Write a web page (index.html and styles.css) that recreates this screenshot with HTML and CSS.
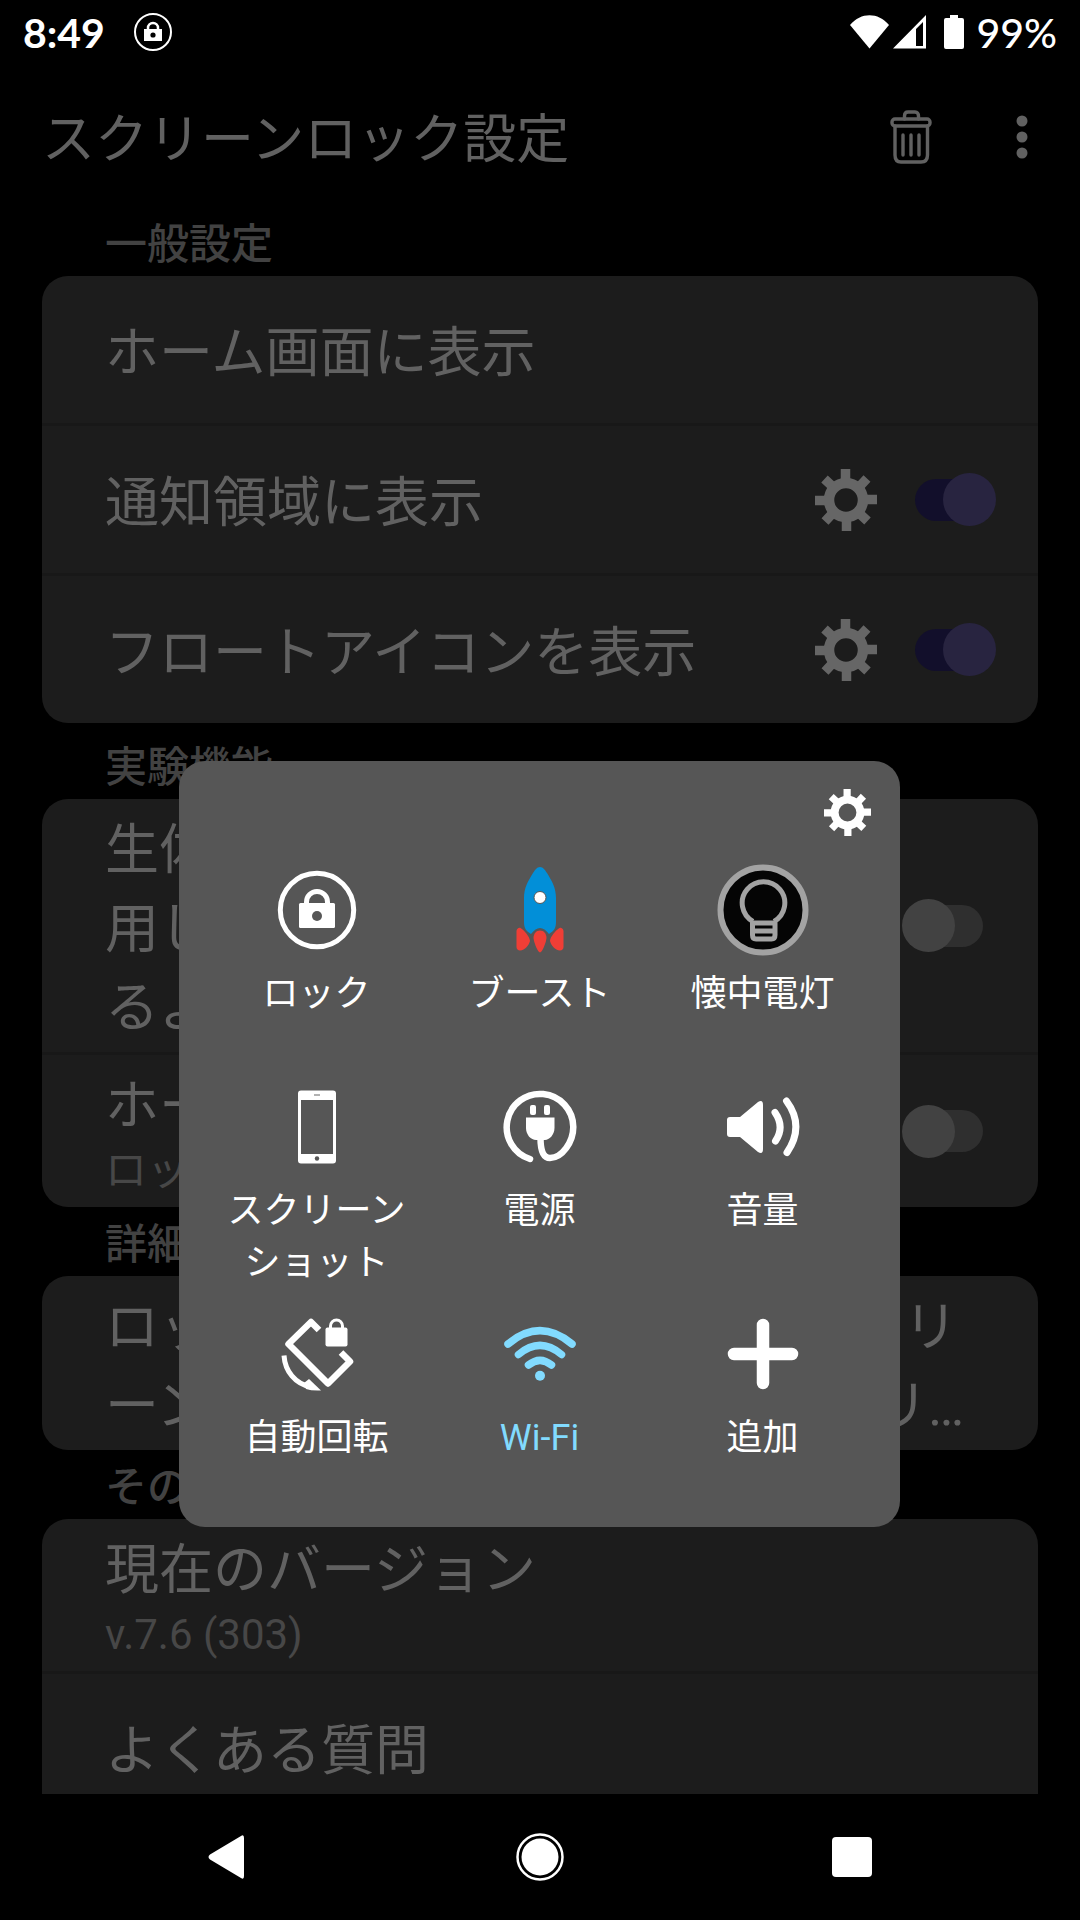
FILE: index.html
```html
<!DOCTYPE html>
<html lang="ja">
<head>
<meta charset="utf-8">
<meta name="viewport" content="width=device-width, initial-scale=1">
<title>スクリーンロック設定</title>
<link rel="stylesheet" href="styles.css">
</head>
<body>
<svg class="defs" aria-hidden="true">
  <symbol id="gear" viewBox="-31 -31 62 62">
    <circle r="17" fill="none" stroke="currentColor" stroke-width="10.500"/>
    <path d="M-0.500-31V-19M0.500 31V19M-31 0.500H-19M31-0.500H19M-21.500-21L-14-14M21-21.500L14-14M-21 21.500L-14 14M21.500 21L14 14" stroke="currentColor" stroke-width="9.500"/>
  </symbol>
</svg>

<div class="screen">
  <header class="status">
    <span class="status-time">8:49</span>
    <svg class="status-lock" viewBox="-20 -20 40 40" width="40" height="40">
      <circle r="18" fill="none" stroke="#fff" stroke-width="2"/>
      <path d="M-9-3H9V9H-9z" fill="#fff"/>
      <path d="M-5-2V-4a5 5 0 0 1 10 0V-2" fill="none" stroke="#fff" stroke-width="2.500"/>
      <circle cy="3" r="2.600" fill="#000"/>
    </svg>
    <div class="status-right">
      <svg viewBox="0 0 39 34" width="39" height="34"><path d="M0 10C11-3 28-3 39 10L19.500 33.500z" fill="#fff"/></svg>
      <svg viewBox="0 0 33 34" width="33" height="34"><path fill-rule="evenodd" d="M0 33.500L33 0V33.500zM23 14V31H30V7z" fill="#fff"/></svg>
      <svg class="battery" viewBox="0 0 20 34" width="20" height="34"><path d="M6 0H14V3H18Q20 3 20 5V32Q20 34 18 34H2Q0 34 0 32V5Q0 3 2 3H6z" fill="#fff"/></svg>
      <span class="status-percent">99%</span>
    </div>
  </header>

  <div class="appbar">
    <h1 class="appbar-title">スクリーンロック設定</h1>
    <button class="icon-button" aria-label="削除">
      <svg viewBox="-21 -27 42 54" width="42" height="54" fill="none" stroke="currentColor" stroke-width="3.400" stroke-linecap="round">
        <rect x="-19" y="-18" width="38" height="7" rx="3"/>
        <path d="M-6.500-18V-21Q-6.500-25-3-25H4Q7.500-25 7.500-21V-18M-16-11V18Q-16 25-10 25H10Q16.500 25 16.500 18V-11M-8-2V18M0-2V18M8-2V18"/>
      </svg>
    </button>
    <button class="icon-button" aria-label="その他のオプション">
      <svg viewBox="-6 -22 12 44" width="12" height="44" fill="currentColor"><circle cy="-16" r="5.500"/><circle r="5.500"/><circle cy="16" r="5.500"/></svg>
    </button>
  </div>

  <main class="settings">
    <h2 class="section-title">一般設定</h2>
    <ul class="card">
      <li class="row"><span class="row-title">ホーム画面に表示</span></li>
      <li class="row">
        <label class="row-title" for="notify">通知領域に表示</label>
        <button class="icon-button" aria-label="通知領域の設定"><svg width="62" height="62"><use href="#gear"/></svg></button>
        <input class="switch" type="checkbox" id="notify" checked>
      </li>
      <li class="row">
        <label class="row-title" for="float">フロートアイコンを表示</label>
        <button class="icon-button" aria-label="フロートアイコンの設定"><svg width="62" height="62"><use href="#gear"/></svg></button>
        <input class="switch" type="checkbox" id="float" checked>
      </li>
    </ul>

    <h2 class="section-title section-title-spaced">実験機能</h2>
    <ul class="card">
      <li class="row row-wide-end">
        <label class="row-title" for="bio">生体認証を使<br>用して解除でき<br>るよう</label>
        <input class="switch" type="checkbox" id="bio">
      </li>
      <li class="row row-wide-end">
        <label class="row-title" for="home">ホームボタン<span class="row-sub">ロックする</span></label>
        <input class="switch" type="checkbox" id="home">
      </li>
    </ul>

    <h2 class="section-title">詳細</h2>
    <ul class="card">
      <li class="row"><span class="row-title">ロック時に画面をOFFしないスクリ<br>ーンを表示 OFF 時のロックアプリ…</span></li>
    </ul>

    <h2 class="section-title">その他</h2>
    <ul class="card">
      <li class="row"><span class="row-title">現在のバージョン<span class="row-sub">v.7.6 (303)</span></span></li>
      <li class="row"><span class="row-title">よくある質問</span></li>
    </ul>
  </main>

  <nav class="navbar">
    <button class="nav-button" aria-label="戻る"><svg viewBox="0 0 40 44" width="40" height="44"><path d="M2 19.500L33 1Q36-1 36 3V41Q36 45 33 43L2 24.500Q-1 22 2 19.500z" fill="#fff"/></svg></button>
    <button class="nav-button" aria-label="ホーム"><svg viewBox="-24 -24 48 48" width="48" height="48"><circle r="22.500" fill="none" stroke="#fff" stroke-width="2.500"/><circle r="18.500" fill="#fff"/></svg></button>
    <button class="nav-button" aria-label="最近"><svg viewBox="0 0 40 40" width="40" height="40"><rect width="40" height="40" rx="4" fill="#fff"/></svg></button>
  </nav>
</div>

<div class="overlay">
  <section class="panel" role="dialog" aria-label="ショートカット">
    <div class="panel-head">
      <button class="panel-gear" aria-label="設定"><svg width="47" height="47"><use href="#gear"/></svg></button>
    </div>
    <div class="panel-grid">
      <button class="tile">
        <svg viewBox="-46 -46 92 92" class="tile-icon">
          <circle r="36.700" fill="none" stroke="#fff" stroke-width="5"/>
          <rect x="-18" y="-7" width="36" height="25" rx="1.500" fill="#fff"/>
          <path d="M-10.500-6V-8a10.500 10.500 0 0 1 21 0V-6" fill="none" stroke="#fff" stroke-width="5"/>
          <circle cy="6" r="5" fill="#565656"/>
        </svg>
        <span>ロック</span>
      </button>
      <button class="tile">
        <svg viewBox="-46 -46 92 92" class="tile-icon">
          <path d="M0-43C3-43 5-40 7-37C12-29 16-22 16-12V12C16 18 14 21 9 24C6 20 3 18 0 18C-3 18-6 20-9 24C-14 21-16 18-16 12V-12C-16-22-12-29-7-37C-5-40-3-43 0-43z" fill="#028fd8"/>
          <circle cy="-12.500" r="6" fill="#fff" stroke="#565656"/>
          <g fill="#ef3e36">
            <path d="M0 20.500C4 20.500 6.500 24 6.500 28C6 33 2 42.500 0 42.500C-2 42.500-6 33-6.500 28C-6.500 24-4 20.500 0 20.500z"/>
            <path d="M-19.500 18C-16 20-10 27-10 31C-11 35-15 40.500-20 40.500C-22 40.500-23.500 39-23.500 37V21C-23.500 19-21 17-19.500 18z"/>
            <path d="M19.500 18C16 20 10 27 10 31C11 35 15 40.500 20 40.500C22 40.500 23.500 39 23.500 37V21C23.500 19 21 17 19.500 18z"/>
          </g>
        </svg>
        <span>ブースト</span>
      </button>
      <button class="tile">
        <svg viewBox="-46 -46 92 92" class="tile-icon" fill="none" stroke="#a3a3a3" stroke-width="5">
          <circle r="42.500" fill="#050505" stroke-width="6"/>
          <path d="M-10 11.500A21.300 21.300 0 1 1 11 11.500"/>
          <path d="M-10.500 13H12V25Q12 29 8.500 29H-7Q-10.500 29-10.500 25zM-10.500 21H12" stroke-linejoin="round"/>
        </svg>
        <span>懐中電灯</span>
      </button>
      <button class="tile">
        <svg viewBox="-46 -46 92 92" class="tile-icon">
          <path fill-rule="evenodd" fill="#fff" d="M-16-36.500H16Q19-36.500 19-33.500V33.500Q19 36.500 16 36.500H-16Q-19 36.500-19 33.500V-33.500Q-19-36.500-16-36.500zM-16-27V27H16V-27z"/>
          <path d="M-3-32H3" stroke="#999" stroke-width="1.500"/>
          <circle cy="31.500" r="2.200" fill="#565656"/>
        </svg>
        <span>スクリーン<br>ショット</span>
      </button>
      <button class="tile">
        <svg viewBox="-46 -46 92 92" class="tile-icon">
          <path d="M-10 32A33.300 33.300 0 1 1 33.300 0C33.300 15 22 31 10 31C3 31 0.500 23 0.500 11" fill="none" stroke="#fff" stroke-width="6.500" stroke-linecap="round"/>
          <path d="M-14-9.500H14.500V1C14.500 8 9 13 5 13H-4C-9 13-14 8-14 1z" fill="#fff"/>
          <rect x="-10" y="-22" width="6" height="10" rx="2" fill="#fff"/>
          <rect x="4" y="-22" width="6" height="10" rx="2" fill="#fff"/>
        </svg>
        <span>電源</span>
      </button>
      <button class="tile">
        <svg viewBox="-46 -46 92 92" class="tile-icon">
          <path d="M-33-10H-23L-5-25Q0-28 0-22V22Q0 28-5 25L-23 10H-33Q-36 10-36 7V-7Q-36-10-33-10z" fill="#fff"/>
          <path d="M12-14.500Q22 0 12.500 14M23.500-26Q42-1 24 25.500" fill="none" stroke="#fff" stroke-width="7" stroke-linecap="round"/>
        </svg>
        <span>音量</span>
      </button>
      <button class="tile">
        <svg viewBox="-46 -46 92 92" class="tile-icon" fill="none" stroke="#fff">
          <path d="M2-24L-6-32L-28.500-10L11 29.500L33 7.500L24-1.500" stroke-width="6.500" stroke-linejoin="round"/>
          <rect x="8.500" y="-26.500" width="22" height="19" rx="2" fill="#fff" stroke="none"/>
          <path d="M13.500-25V-28a6 6 0 0 1 12 0V-25" stroke-width="3"/>
          <path d="M-33 1.500C-32 17-22 30-6 33" stroke-width="5"/>
          <path d="M-13 29L-8 25L4 36.500Q-5 37-11 35z" fill="#fff" stroke="none"/>
        </svg>
        <span>自動回転</span>
      </button>
      <button class="tile tile-active">
        <svg viewBox="-46 -46 92 92" class="tile-icon">
          <path d="M-32-10Q0-36.600 32-10M-21.500 0.500Q0-17.600 21.500 0.500M-11.500 11Q0 1.600 11.500 11" fill="none" stroke="currentColor" stroke-width="7.500" stroke-linecap="round"/>
          <circle cy="21.700" r="5" fill="currentColor"/>
        </svg>
        <span>Wi-Fi</span>
      </button>
      <button class="tile">
        <svg viewBox="-46 -46 92 92" class="tile-icon"><path d="M-29 0H29M0-29V29" stroke="#fff" stroke-width="12.500" stroke-linecap="round"/></svg>
        <span>追加</span>
      </button>
    </div>
  </section>
</div>
</body>
</html>
```
FILE: styles.css
```css
* {
  box-sizing: border-box;
}

body {
  margin: 0;
  background: #000;
  font-family: Roboto, "Noto Sans CJK JP", sans-serif;
}

button {
  padding: 0;
  border: 0;
  background: none;
  color: inherit;
  font: inherit;
}

svg {
  display: block;
}

.defs {
  display: none;
}

.screen {
  display: flex;
  flex-direction: column;
  height: 100vh;
  overflow: hidden;
}

/* Status bar */
.status {
  display: flex;
  align-items: center;
  height: 64px;
  flex: none;
  padding: 0 23px;
  color: #fff;
  font-family: Lato, sans-serif;
  font-size: 41px;
  font-weight: 700;
  line-height: 62px;
}

.status-time,
.status-percent {
  padding-top: 2px;
}

.status-lock {
  margin-left: 28px;
}

.status-right {
  display: flex;
  align-items: center;
  gap: 4px;
  margin-left: auto;
}

.battery {
  margin: 0 8px 0 14px;
}

.status-percent {
  font-weight: 500;
}

/* App bar */
.appbar {
  display: flex;
  align-items: center;
  flex: none;
  height: 143px;
  padding: 2px 52px 0 42px;
  color: #616161;
}

.appbar-title {
  flex: 1;
  margin: 0;
  padding-top: 7px;
  font-size: 53px;
  font-weight: 400;
  line-height: 79px;
}

.appbar .icon-button + .icon-button {
  margin-left: 84px;
}

/* Settings list */
.settings {
  flex: 1;
  min-height: 0;
  overflow: hidden;
  padding: 0 42px;
}

.section-title {
  margin: 0;
  padding: 7px 63px 1px;
  color: #424242;
  font-size: 42px;
  font-weight: 500;
  line-height: 61px;
}

.section-title-spaced {
  margin-top: 7px;
}

.card {
  margin: 0;
  padding: 0;
  list-style: none;
  border-radius: 26px;
  background: #1c1c1c;
}

.row {
  display: flex;
  align-items: center;
  gap: 38px;
  min-height: 147px;
  padding: 8px 42px 8px 63px;
  color: #616161;
  font-size: 54px;
  line-height: 79px;
}

.row + .row {
  border-top: 3px solid #181818;
  min-height: 150px;
}

.row-wide-end {
  padding-right: 55px;
}

.row-title {
  flex: 1;
  margin-bottom: -4px;
  padding-top: 4px;
  white-space: nowrap;
}

.row-sub {
  display: block;
  margin-top: -4px;
  padding-bottom: 4px;
  color: #474747;
  font-size: 42px;
  line-height: 57px;
}

.row .icon-button {
  color: #666;
}

.switch {
  appearance: none;
  display: grid;
  align-items: center;
  flex: none;
  width: 81px;
  height: 53px;
  margin: 0;
}

.switch::before,
.switch::after {
  content: "";
  grid-area: 1 / 1;
}

.switch::before {
  justify-self: end;
  width: 75px;
  height: 42px;
  border-radius: 21px;
  background: #2f2f2f;
}

.switch::after {
  justify-self: start;
  width: 53px;
  height: 53px;
  border-radius: 50%;
  background: #424242;
}

.switch:checked::before {
  justify-self: start;
  background: #120f2b;
}

.switch:checked::after {
  justify-self: end;
  background: #282440;
}

/* System navigation */
.navbar {
  display: grid;
  grid-template-columns: repeat(3, 1fr);
  flex: none;
  height: 126px;
  padding: 0 72px;
}

.nav-button {
  display: grid;
  place-items: center;
}

/* Shortcut panel over the list */
.overlay {
  position: absolute;
  inset: 0;
  display: flex;
  justify-content: center;
  align-items: flex-start;
  padding: 761px 1px 0 0;
}

.panel {
  width: 721px;
  max-width: 100%;
  padding: 0 26px 21px;
  border-radius: 26px;
  background: #565656;
  color: #fff;
}

.panel-head {
  display: flex;
  justify-content: flex-end;
  align-items: center;
  height: 103px;
  padding-right: 3px;
}

.panel-grid {
  display: grid;
  grid-template-columns: repeat(3, 1fr);
  grid-auto-rows: minmax(198px, auto);
  row-gap: 19px;
}

.tile {
  display: flex;
  flex-direction: column;
  align-items: center;
  gap: 12px;
  font-size: 36px;
  line-height: 52px;
}

.tile-icon {
  flex: none;
  width: 92px;
  height: 92px;
}

.tile-active {
  color: #82dbff;
}
```
